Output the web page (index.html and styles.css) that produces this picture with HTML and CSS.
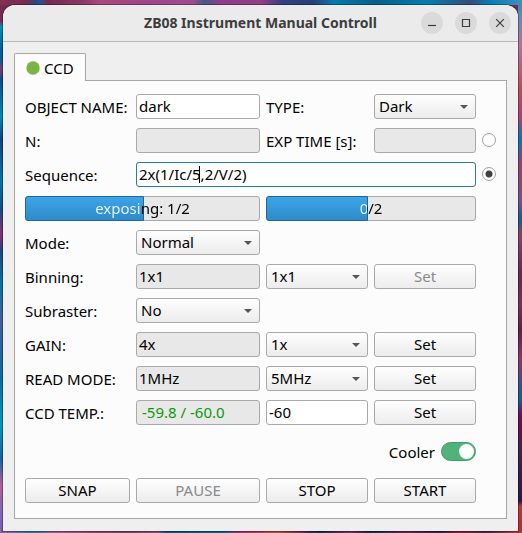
FILE: index.html
```html
<!DOCTYPE html>
<html lang="en">
<head>
<meta charset="utf-8">
<title>ZB08 Instrument Manual Controll</title>
<link rel="stylesheet" href="styles.css">
</head>
<body>
<main class="window">
  <header class="titlebar">
    <h1 class="title">ZB08 Instrument Manual Controll</h1>
    <div class="window-buttons">
      <button class="round" type="button" aria-label="Minimize"><svg viewBox="0 0 22 22"><path d="M7 13.5h8"/></svg></button>
      <button class="round" type="button" aria-label="Maximize"><svg viewBox="0 0 22 22"><path d="M7.5 7.5h7v7h-7z"/></svg></button>
      <button class="round" type="button" aria-label="Close"><svg viewBox="0 0 22 22"><path d="M7.2 7.2l7.6 7.6M14.8 7.2l-7.6 7.6"/></svg></button>
    </div>
  </header>
  <div class="content">
    <div class="tabs" role="tablist">
      <button class="tab" type="button" role="tab" aria-selected="true"><svg class="dot" viewBox="0 0 14 14"><circle cx="7" cy="7" r="6.7"/></svg>CCD</button>
    </div>
    <form class="panel">
      <label for="object">OBJECT NAME:</label>
      <input class="field" id="object" type="text" value="dark">
      <label for="type">TYPE:</label>
      <select class="field" id="type"><option>Dark</option></select>

      <label class="first" for="count">N:</label>
      <input class="field" id="count" type="text" disabled>
      <label for="exptime">EXP TIME [s]:</label>
      <input class="field" id="exptime" type="text" disabled>
      <input class="radio" type="radio" name="source" aria-label="Single exposure">

      <label class="first" for="sequence">Sequence:</label>
      <div class="sequence">
        <input class="field active" id="sequence" type="text" value="2x(1/Ic/5,2/V/2)">
        <span class="caret"></span>
      </div>
      <input class="radio" type="radio" name="source" aria-label="Sequence" checked>

      <div class="progress first" role="progressbar" aria-label="Exposure" style="--value: 50%"><span class="progress-text">exposing: 1/2</span></div>
      <div class="progress" role="progressbar" aria-label="Sequence progress" style="--value: 48%"><span class="progress-text">0/2</span></div>

      <label class="first" for="mode">Mode:</label>
      <select class="field" id="mode"><option>Normal</option></select>

      <label class="first" for="binning">Binning:</label>
      <input class="field" id="binning" type="text" value="1x1" readonly>
      <select class="field" aria-label="New binning"><option>1x1</option></select>
      <button class="button" type="button" disabled>Set</button>

      <label class="first" for="subraster">Subraster:</label>
      <select class="field" id="subraster"><option>No</option></select>

      <label class="first" for="gain">GAIN:</label>
      <input class="field" id="gain" type="text" value="4x" readonly>
      <select class="field" aria-label="New gain"><option>1x</option></select>
      <button class="button" type="button">Set</button>

      <label class="first" for="readmode">READ MODE:</label>
      <input class="field" id="readmode" type="text" value="1MHz" readonly>
      <select class="field" aria-label="New read mode"><option>5MHz</option></select>
      <button class="button" type="button">Set</button>

      <label class="first" for="temp">CCD TEMP.:</label>
      <input class="field good" id="temp" type="text" value="-59.8 / -60.0" readonly>
      <input class="field" type="text" value="-60" aria-label="New temperature">
      <button class="button" type="button">Set</button>

      <label class="cooler">Cooler <input class="switch" type="checkbox" role="switch" checked></label>

      <button class="button first" type="button">SNAP</button>
      <button class="button" type="button" disabled>PAUSE</button>
      <button class="button" type="button">STOP</button>
      <button class="button" type="button">START</button>
    </form>
  </div>
</main>
</body>
</html>
```
FILE: styles.css
```css
* {
  box-sizing: border-box;
}

body {
  margin: 0;
  padding: 5px 4px 2px 3px;
  min-height: 100vh;
  display: flex;
  font: 15px/18px "Noto Sans", sans-serif;
  color: #000;
  background:
    linear-gradient(90deg, #823352 0%, #78294e 5%, #284883 7%, #2c508d 8%, #75294f 9%, #8a3968 16%, #a84a78 19%, #9e448c 28%, #a14b90 37%, #435986 39%, #8c3d8d 42%, #923f82 50%, #33427e 54%, #263f77 60%, #0878ad 64%, #066087 72%, #087caf 82%, #354d78 90%, #087eb5 94%, #3e91bb 100%) top / 100% 5px no-repeat,
    linear-gradient(90deg, #8961ae 0%, #2477a6 6%, #98578f 11%, #913d67 19%, #6f455d 25%, #854b81 30%, #06557f 32%, #086090 43%, #a02d70 46%, #b64c33 53%, #672954 58%, #0e2850 61%, #70325c 67%, #14284d 71%, #5b2957 78%, #2c1e48 84%, #951d36 88%, #4a234d 93%, #bd3837 100%) bottom / 100% 2px no-repeat,
    linear-gradient(#702c4e 0%, #762b50 4%, #078db8 5%, #075f9e 9%, #075c94 11%, #733d72 13%, #0c4b8b 15%, #0688b2 22%, #15417d 26%, #0872a6 34%, #184b86 39%, #842f70 44%, #24447d 47%, #0870a2 53%, #435e9b 60%, #0b6ba1 71%, #0894b9 80%, #17619e 86%, #af5f99 91%, #8168b2 96%, #7f5dad 100%) left / 3px 100% no-repeat,
    linear-gradient(#2d87b6 0%, #5a91b6 3%, #b07396 9%, #b74d5c 17%, #a64474 22%, #0875b0 26%, #963f73 31%, #735091 38%, #175a92 41%, #824174 44%, #642751 52%, #792f62 57%, #5c2148 62%, #8b3574 67%, #0f6094 75%, #76075f 78%, #402052 85%, #241a4c 94%, #bb3633 95%, #ac302f 100%) right / 4px 100% no-repeat,
    #702c4e;
}

.window {
  flex: 1;
  display: flex;
  flex-direction: column;
  min-width: 0;
  background: #efefef;
  border-radius: 12px 12px 0 0;
  box-shadow: 0 0 0 1px rgba(0, 0, 0, 0.3);
}

.titlebar {
  display: grid;
  grid-template-columns: 1fr auto 1fr;
  align-items: center;
  height: 37px;
  padding: 0 7px;
  background: #ebebeb;
  border-bottom: 1px solid #b9b9b9;
  border-radius: 12px 12px 0 0;
}

.title {
  grid-column: 2;
  margin: 0;
  font-size: 14px;
  font-weight: 700;
  color: #3d3d3d;
}

.window-buttons {
  display: flex;
  justify-content: flex-end;
  gap: 12px;
}

.round {
  width: 22px;
  height: 22px;
  padding: 0;
  border: 0;
  border-radius: 50%;
  background: #dadada;
}

.round svg {
  display: block;
  fill: none;
  stroke: #3d3d3d;
  stroke-width: 1.2;
}

.content {
  flex: 1;
  display: flex;
  flex-direction: column;
  padding: 11px 11px 12px;
}

.tabs {
  display: flex;
  margin-bottom: -1px;
}

.tab {
  z-index: 1;
  display: flex;
  align-items: center;
  gap: 4px;
  height: 28px;
  padding: 0 11px;
  font: inherit;
  color: inherit;
  background: #fcfcfc;
  border: 1px solid #a7a7a7;
  border-bottom: 0;
  border-radius: 2px 2px 0 0;
}

.dot {
  width: 14px;
  height: 14px;
  fill: #7cb342;
}

.panel {
  flex: 1;
  display: grid;
  grid-template-columns: minmax(0, 105fr) minmax(0, 124fr) minmax(0, 102fr) minmax(0, 102fr) 14px;
  grid-auto-rows: minmax(25px, auto);
  align-content: start;
  align-items: center;
  gap: 9px 6px;
  padding: 13px 10px 14px;
  background: #fcfcfc;
  border: 1px solid #a7a7a7;
}

.panel label {
  white-space: nowrap;
}

.first {
  grid-column-start: 1;
}

.field,
.button {
  width: 100%;
  height: 25px;
  margin: 0;
  font: inherit;
  color: #000;
  border: 1px solid #a9a9a9;
  border-radius: 3px;
  outline: 0;
}

.field {
  padding: 0 2px 1px;
  background: #fff;
}

.field:read-only,
.field:disabled {
  background: #e8e8e8;
}

.field.good {
  padding: 0 5px 1px;
  color: #0a9a0a;
}

.field.active {
  border-color: #2b78ab;
}

select.field,
select.field:read-only {
  appearance: none;
  padding: 0 20px 1px 4px;
  background:
    url("data:image/svg+xml,%3Csvg xmlns='http://www.w3.org/2000/svg' viewBox='0 0 8 4'%3E%3Cpath d='M0 0h8L4 4z' fill='%23555'/%3E%3C/svg%3E") right 7px center / 8px 4px no-repeat,
    linear-gradient(#fefefe, #ececec);
}

.button {
  padding: 0 0 1px;
  background: linear-gradient(#fefefe, #ececec);
}

.button:disabled {
  color: #8a8a8a;
}

.sequence {
  position: relative;
  grid-column: span 3;
  display: flex;
}

.caret {
  position: absolute;
  left: 63px;
  top: 4px;
  width: 1px;
  height: 17px;
  background: #000;
}

.radio {
  appearance: none;
  width: 14px;
  height: 14px;
  margin: 0 0 1px;
  border: 1px solid #a0a0a0;
  border-radius: 50%;
  background: #fff;
}

.radio:checked {
  background: radial-gradient(circle, #404040 3px, #fff 4px);
}

.progress {
  position: relative;
  grid-column-end: span 2;
  height: 25px;
  border: 1px solid #a9a9a9;
  border-radius: 3px;
  background: #e8e8e8;
}

.progress::before {
  content: "";
  position: absolute;
  inset: -1px auto -1px -1px;
  width: var(--value);
  border: 1px solid #23679a;
  border-radius: 3px 0 0 3px;
  background: linear-gradient(#3ba5e9, #308bc8);
}

.progress-text {
  position: relative;
  display: block;
  line-height: 23px;
  text-align: center;
  color: transparent;
  background: linear-gradient(90deg, #eff6fb var(--value), #000 var(--value));
  background-clip: text;
}

.cooler {
  grid-column: 1 / 5;
  display: flex;
  justify-content: flex-end;
  align-items: center;
  gap: 6px;
  height: 35px;
}

.switch {
  appearance: none;
  display: flex;
  justify-content: flex-end;
  width: 35px;
  height: 19px;
  margin: 0;
  padding: 1px;
  border: 1px solid #3d9e68;
  border-radius: 10px;
  background: #51b27b;
}

.switch::before {
  content: "";
  width: 15px;
  height: 15px;
  border-radius: 50%;
  background: #fff;
}
```
